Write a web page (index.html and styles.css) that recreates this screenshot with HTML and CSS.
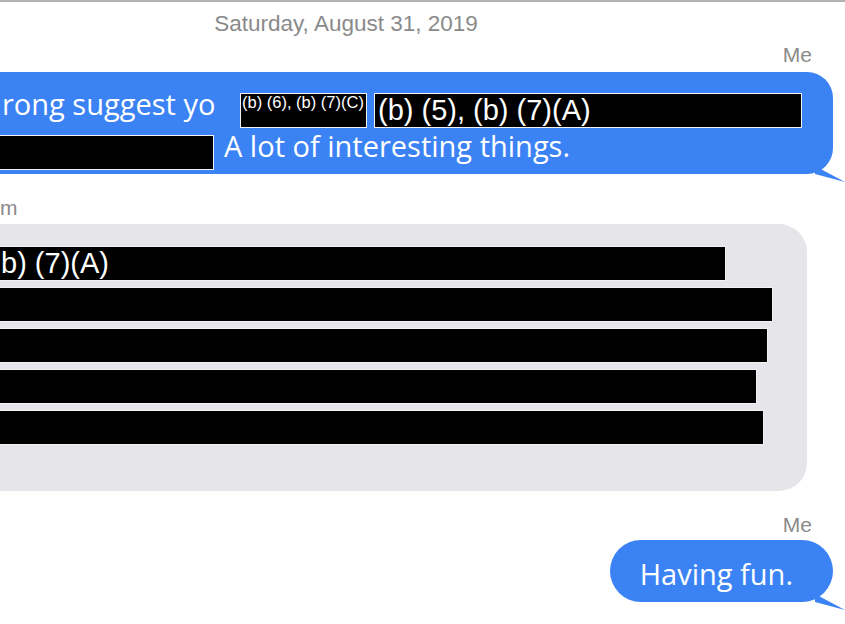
FILE: index.html
```html
<!DOCTYPE html>
<html>
<head>
<meta charset="utf-8">
<link rel="stylesheet" href="styles.css">
</head>
<body>
<div class="page">
  <div class="chat">
    <div class="date">Saturday, August 31, 2019</div>
    <div class="sender me first">Me</div>
    <div class="bubble sent wide">
      <div class="row">
        <span class="txt lead">rong suggest yo</span>
        <span class="redact small gap" style="width:127px">(b) (6), (b) (7)(C)</span>
        <span class="redact" style="width:428px">(b) (5), (b) (7)(A)</span>
      </div>
      <div class="row">
        <span class="redact gap2" style="width:234px"></span>
        <span class="txt">A lot of interesting things.</span>
      </div>
      <svg class="tail" viewBox="0 0 30 20" width="30" height="20"><path d="M0 4 L30 20 L0 12 Z"/></svg>
    </div>
    <div class="sender them">m</div>
    <div class="bubble recv">
      <div class="redact cut" style="width:746px">b) (7)(A)</div>
      <div class="redact" style="width:793px"></div>
      <div class="redact" style="width:788px"></div>
      <div class="redact" style="width:777px"></div>
      <div class="redact" style="width:784px"></div>
    </div>
    <div class="sender me second">Me</div>
    <div class="bubble sent short">Having fun.<svg class="tail" viewBox="0 0 30 20" width="30" height="20"><path d="M0 4 L30 20 L0 12 Z"/></svg></div>
  </div>
</div>
</body>
</html>
```
FILE: styles.css
```css
html, body {
  margin: 0;
  background: #ffffff;
}
body {
  width: 845px;
  height: 624px;
  overflow: hidden;
}
.page {
  border-top: 2px solid #b2b2b2;
  height: 622px;
  overflow: hidden;
}
.chat {
  margin-left: -153px;
  width: 998px;
  display: flex;
  flex-direction: column;
}
.date {
  margin-top: 9px;
  text-align: center;
  font: 22.5px/26px "Liberation Sans", Arial, sans-serif;
  color: #8a8a8a;
}
.sender {
  font: 21px/24px "Liberation Sans", Arial, sans-serif;
  color: #8a8a8a;
}
.me {
  align-self: flex-end;
  margin-right: 33px;
}
.me.first { margin-top: 6px; }
.me.second { margin-top: 22px; }
.them {
  align-self: flex-start;
  margin-left: 153px;
  margin-top: 22px;
}
.bubble {
  position: relative;
  box-sizing: border-box;
}
.sent {
  align-self: flex-end;
  margin-right: 12px;
  background: #3b82f4;
  color: #ffffff;
}
.sent.wide {
  margin-top: 5px;
  border-radius: 26px;
  padding: 21px 31px 4px 20px;
  display: flex;
  flex-direction: column;
  gap: 7px;
}
.row {
  display: flex;
  align-items: flex-start;
}
.txt {
  font: 29px/35px "Open Sans", sans-serif;
  color: #ffffff;
  white-space: nowrap;
  margin-top: -7px;
}
.lead {
  margin-left: 22px;
  width: 238px;
}
.redact {
  background: #000000;
  border: 1px solid #f2f2f2;
  box-sizing: border-box;
  height: 35px;
  color: #ffffff;
  font: 29px/33px "Liberation Sans", Arial, sans-serif;
  padding-left: 3px;
  white-space: nowrap;
  overflow: hidden;
  flex: none;
}
.redact.small {
  font-size: 16.5px;
  line-height: 17px;
  padding-left: 1px;
}
.gap { margin-right: 7px; }
.gap2 { margin-right: 10px; }
.recv {
  align-self: flex-start;
  margin-left: 93px;
  margin-top: 4px;
  width: 867px;
  background: #e5e5ea;
  border-radius: 28px;
  padding: 22px 0 46px 40px;
  display: flex;
  flex-direction: column;
  gap: 6px;
}
.redact.cut { padding-left: 20px; }
.sent.short {
  margin-top: 3px;
  height: 62px;
  border-radius: 31px;
  padding: 6px 40px 0 30px;
  font: 29px/56px "Open Sans", sans-serif;
  white-space: nowrap;
}
.tail {
  position: absolute;
  right: -12px;
  bottom: -8px;
  fill: #3b82f4;
  display: block;
}
```
